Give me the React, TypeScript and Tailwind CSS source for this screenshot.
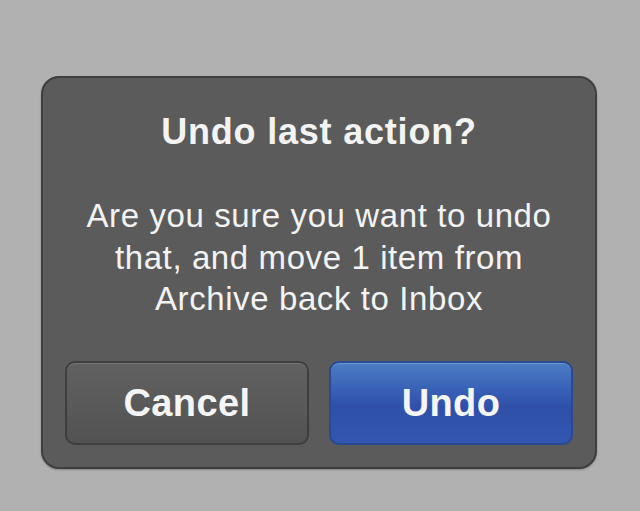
import React from "react";

export default function App() {
  return (
    <div
      className="w-[640px] h-[511px] bg-[#b1b1b1] pt-[76px] pl-[41px] overflow-hidden"
      style={{ fontFamily: '"Liberation Sans", Arial, sans-serif' }}
    >
      <div className="w-[556px] h-[393px] rounded-[18px] bg-[#5b5b5b] border-2 border-[#3f3f3f] shadow-[0_1px_2px_rgba(0,0,0,0.25)] flex flex-col items-center pt-[34px] px-[22px]">
        <h1 className="text-[36px] leading-[40px] font-bold text-[#f3f3f3] tracking-[0.8px] whitespace-nowrap">
          Undo last action?
        </h1>
        <p className="mt-[43px] text-[33px] leading-[41.5px] text-[#f3f3f3] text-center tracking-[0.6px] whitespace-nowrap">
          Are you sure you want to undo
          <br />
          that, and move 1 item from
          <br />
          Archive back to Inbox
        </p>
        <div className="mt-auto mb-[22px] flex w-full gap-[20px]">
          <button className="w-[244px] h-[84px] rounded-[10px] border-2 border-[#3e3e3e] bg-gradient-to-b from-[#616161] to-[#525252] shadow-[inset_0_1px_0_rgba(255,255,255,0.12)] text-[38px] font-bold text-[#f5f5f5] tracking-[0.4px] flex items-center justify-center">
            Cancel
          </button>
          <button className="w-[244px] h-[84px] rounded-[10px] border-2 border-[#284a93] bg-[linear-gradient(to_bottom,#4d7cc4_0%,#3a64b8_30%,#2f4fa9_55%,#3456b0_100%)] shadow-[inset_0_1px_0_rgba(255,255,255,0.2)] text-[38px] font-bold text-[#f5f5f5] tracking-[0.4px] flex items-center justify-center">
            Undo
          </button>
        </div>
      </div>
    </div>
  );
}
